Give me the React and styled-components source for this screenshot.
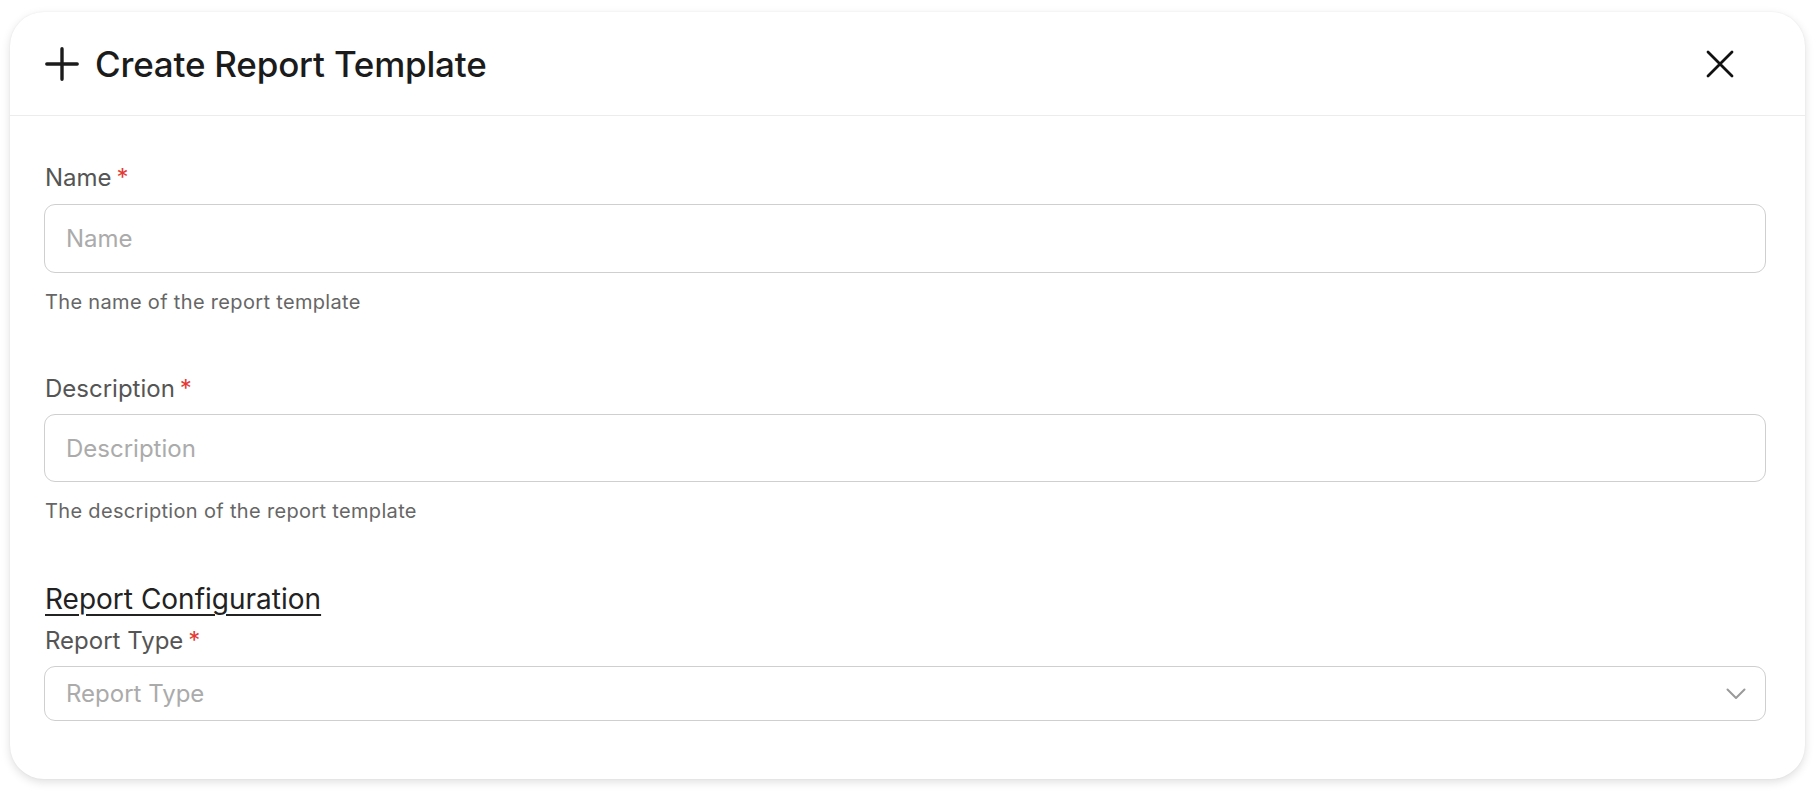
import React from "react";
import styled, { createGlobalStyle } from "styled-components";

const Global = createGlobalStyle`
  html, body { margin: 0; padding: 0; background: #ffffff; }
  body { font-family: Inter, "Noto Sans", "Liberation Sans", sans-serif; }
  * { box-sizing: border-box; }
`;

const Page = styled.div`
  padding: 12px 15px 15px 10px;
`;

const Card = styled.div`
  background: #fff;
  border-radius: 34px;
  box-shadow: 0 3px 10px rgba(0, 0, 0, 0.13), 0 0 2px rgba(0, 0, 0, 0.06);
  overflow: hidden;
`;

const Header = styled.div`
  display: flex;
  align-items: center;
  justify-content: space-between;
  height: 104px;
  padding: 0 70px 0 35px;
  border-bottom: 1px solid #ececec;
`;

const TitleRow = styled.div`
  display: flex;
  align-items: center;
  gap: 16px;
`;

const Title = styled.h2`
  margin: 0;
  font-size: 35px;
  font-weight: 500;
  color: #1b1b1b;
  letter-spacing: -0.2px;
`;

const IconButton = styled.button`
  border: 0;
  background: none;
  padding: 0;
  display: flex;
  cursor: pointer;
`;

const Body = styled.div`
  padding: 47px 39px 58px 34px;
  display: flex;
  flex-direction: column;
`;

const Field = styled.div`
  display: flex;
  flex-direction: column;
  margin-bottom: ${(p) => p.$mb || 0}px;
`;

const Label = styled.label`
  font-size: 24px;
  line-height: 29px;
  color: #555;
  margin-bottom: ${(p) => p.$gap || 12}px;
  padding-left: 1px;
`;

const Star = styled.span`
  color: #e53935;
  margin-left: 5px;
`;

const Input = styled.input`
  height: ${(p) => p.$h || 69}px;
  border: 1px solid #cfcfcf;
  border-radius: 11px;
  padding: 0 21px;
  font-size: 24px;
  font-family: inherit;
  color: #333;
  outline: none;
  &::placeholder { color: #ababab; }
`;

const Helper = styled.div`
  font-size: 20px;
  line-height: 24px;
  letter-spacing: 0.33px;
  color: #666;
  margin-top: 17px;
  padding-left: 1px;
`;

const Section = styled.div`
  font-size: 28px;
  line-height: 34px;
  color: #222;
  text-decoration: underline;
  text-underline-offset: 5px;
  text-decoration-thickness: 2px;
  margin-bottom: 10px;
  padding-left: 1px;
`;

const SelectBox = styled.div`
  height: 55px;
  border: 1px solid #cfcfcf;
  border-radius: 11px;
  padding: 0 19px 0 21px;
  display: flex;
  align-items: center;
  justify-content: space-between;
  font-size: 24px;
  color: #ababab;
`;

export default function App() {
  return (
    <Page>
      <Global />
      <Card>
        <Header>
          <TitleRow>
            <svg width="34" height="34" viewBox="0 0 34 34">
              <path d="M17 1.8 V32.2 M1.8 17 H32.2" stroke="#1b1b1b" strokeWidth="3.4" strokeLinecap="round" fill="none" />
            </svg>
            <Title>Create Report Template</Title>
          </TitleRow>
          <IconButton aria-label="close">
            <svg width="30" height="30" viewBox="0 0 30 30">
              <path d="M3 3 L27 27 M27 3 L3 27" stroke="#111" strokeWidth="2.8" strokeLinecap="round" fill="none" />
            </svg>
          </IconButton>
        </Header>
        <Body>
          <Field $mb={60}>
            <Label>Name<Star>*</Star></Label>
            <Input placeholder="Name" />
            <Helper>The name of the report template</Helper>
          </Field>
          <Field $mb={59}>
            <Label $gap={11}>Description<Star>*</Star></Label>
            <Input placeholder="Description" $h={68} />
            <Helper>The description of the report template</Helper>
          </Field>
          <Section>Report Configuration</Section>
          <Field>
            <Label $gap={11}>Report Type<Star>*</Star></Label>
            <SelectBox>
              <span>Report Type</span>
              <svg width="20" height="12" viewBox="0 0 20 12">
                <path d="M1.5 1.5 L10 10 L18.5 1.5" stroke="#9a9a9a" strokeWidth="2" strokeLinecap="round" strokeLinejoin="round" fill="none" />
              </svg>
            </SelectBox>
          </Field>
        </Body>
      </Card>
    </Page>
  );
}
